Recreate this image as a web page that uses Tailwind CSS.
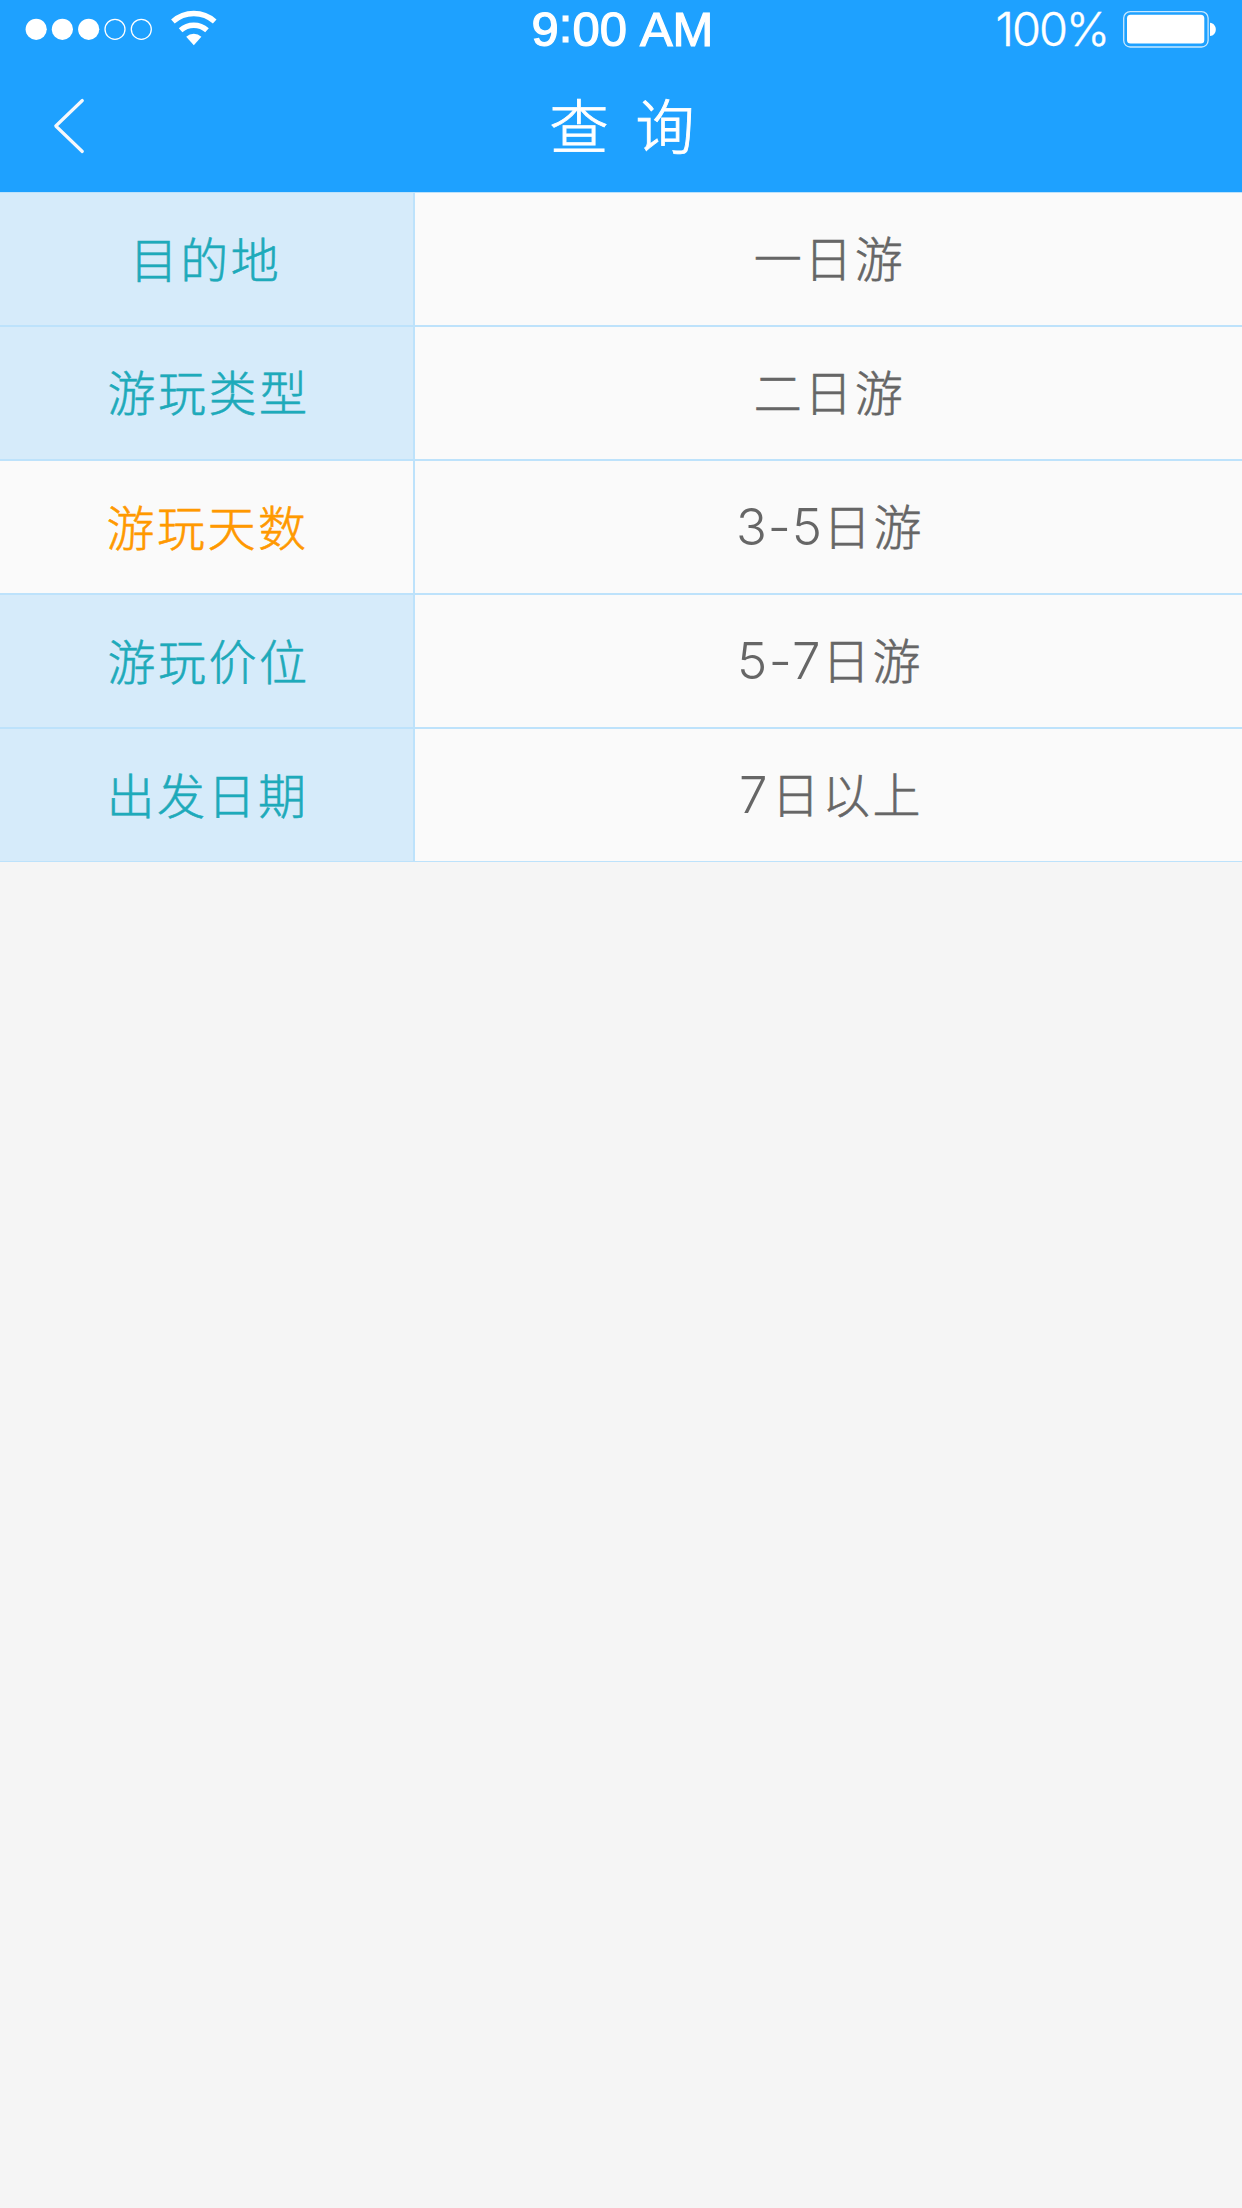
<!DOCTYPE html>
<html lang="zh-CN">
<head>
<meta charset="utf-8">
<title>查询</title>
<script src="https://cdn.jsdelivr.net/npm/@tailwindcss/browser@4"></script>
</head>
<body class="bg-[#f5f5f5] w-[1242px] h-[2208px] overflow-hidden font-['Liberation_Sans','Noto_Sans_CJK_SC',sans-serif]">
<header class="h-[193px] bg-[#1ea1ff] border-b border-[#bde2fb] text-white">
  <!-- status bar -->
  <div class="h-[58px] grid grid-cols-3 leading-[58px]">
    <svg class="w-[240px] h-[58px]" viewBox="0 0 240 58" fill="white">
      <circle cx="36.2" cy="29.3" r="10.6"/><circle cx="62.4" cy="29.3" r="10.6"/><circle cx="88.7" cy="29.3" r="10.6"/>
      <g fill="none" stroke="white" stroke-width="1.3"><circle cx="115" cy="29.3" r="10"/><circle cx="141.3" cy="29.3" r="10"/></g>
      <g fill="none" stroke="white" stroke-width="5.4">
        <path d="M172.9 21.6A31.2 31.2 0 0 1 214.7 21.6"/>
        <path d="M180.6 30.3A19.8 19.8 0 0 1 207 30.3"/>
      </g>
      <path d="M193.8 45.3L186.2 36.7A11.5 11.5 0 0 1 201.4 36.7Z"/>
    </svg>
    <div class="text-center text-[49px] whitespace-nowrap pl-[3px] [word-spacing:2px] [-webkit-text-stroke:1.2px_white]">9<span class="relative -top-1">:</span>00 AM</div>
    <div class="flex justify-end">
      <span class="font-['Inter'] font-light text-[47px] tracking-[-2px] mr-[14px] [-webkit-text-stroke:0.4px_white]">100%</span>
      <svg class="w-[120px] h-[58px]" viewBox="1122 0 120 58" fill="white">
        <rect x="1123.7" y="11.6" width="84.4" height="35.4" rx="6.5" fill="none" stroke="white" stroke-opacity=".75" stroke-width="1.3"/>
        <rect x="1127" y="14.8" width="77.3" height="28.6" rx="3.5"/>
        <path d="M1210 22.8C1213.5 23.2 1215.8 26 1215.8 29.4S1213.5 35.6 1210 36Z"/>
      </svg>
    </div>
  </div>
  <!-- navigation bar -->
  <nav class="h-[133px] grid grid-cols-3 font-['Noto_Sans_CJK_SC'] font-light">
    <svg class="w-[120px] h-[133px]" viewBox="0 58 120 133" fill="none" stroke="#f6f8fb" stroke-width="3.2" stroke-linecap="round" stroke-linejoin="round"><path d="M82.3 100.5L55.8 126L82.3 151.5"/></svg>
    <h1 class="text-center text-[59px] leading-[131px] tracking-[7px] pl-[9px] whitespace-nowrap [-webkit-text-stroke:0.9px_white]">查 询</h1>
  </nav>
</header>
<main class="flex h-[669px] border-b border-[#bde2fb] text-[48px] font-light tracking-[2.5px] text-center leading-[132px] [-webkit-text-stroke:0.6px]">
  <ul class="w-[415px] border-r-2 border-[#bde2fb] bg-[#d6ebfa] text-[#1eaaba] divide-y-2 divide-[#bde2fb]">
    <li class="h-[134px] pr-[2px] leading-[138px]">目的地</li>
    <li class="h-[134px] pl-[4px] leading-[136px]">游玩类型</li>
    <li class="h-[134px] pl-[2px] leading-[138px] bg-[#fafafa] text-[#ff9900]">游玩天数</li>
    <li class="h-[134px] pl-[4px] leading-[138px]">游玩价位</li>
    <li class="h-[132px] pl-[2px] leading-[138px]">出发日期</li>
  </ul>
  <ul class="flex-1 bg-[#fafafa] text-[#666] divide-y-2 divide-[#bde2fb]">
    <li class="h-[134px] pl-[2px] leading-[135px]">一日游</li>
    <li class="h-[134px] pl-[2px] leading-[135px]">二日游</li>
    <li class="h-[134px] pl-[3px] leading-[131px]"><span class="font-['Inter'] text-[51px] tracking-[0.9px] [-webkit-text-stroke:0]">3-5</span>日游</li>
    <li class="h-[134px] pl-[3px] leading-[131px]"><span class="font-['Inter'] text-[51px] tracking-[1.5px] [-webkit-text-stroke:0]">5-7</span>日游</li>
    <li class="h-[132px] pl-[5px] leading-[131px]"><span class="font-['Inter'] text-[51px] tracking-[3.8px] [-webkit-text-stroke:0]">7</span>日以上</li>
  </ul>
</main>
</body>
</html>
